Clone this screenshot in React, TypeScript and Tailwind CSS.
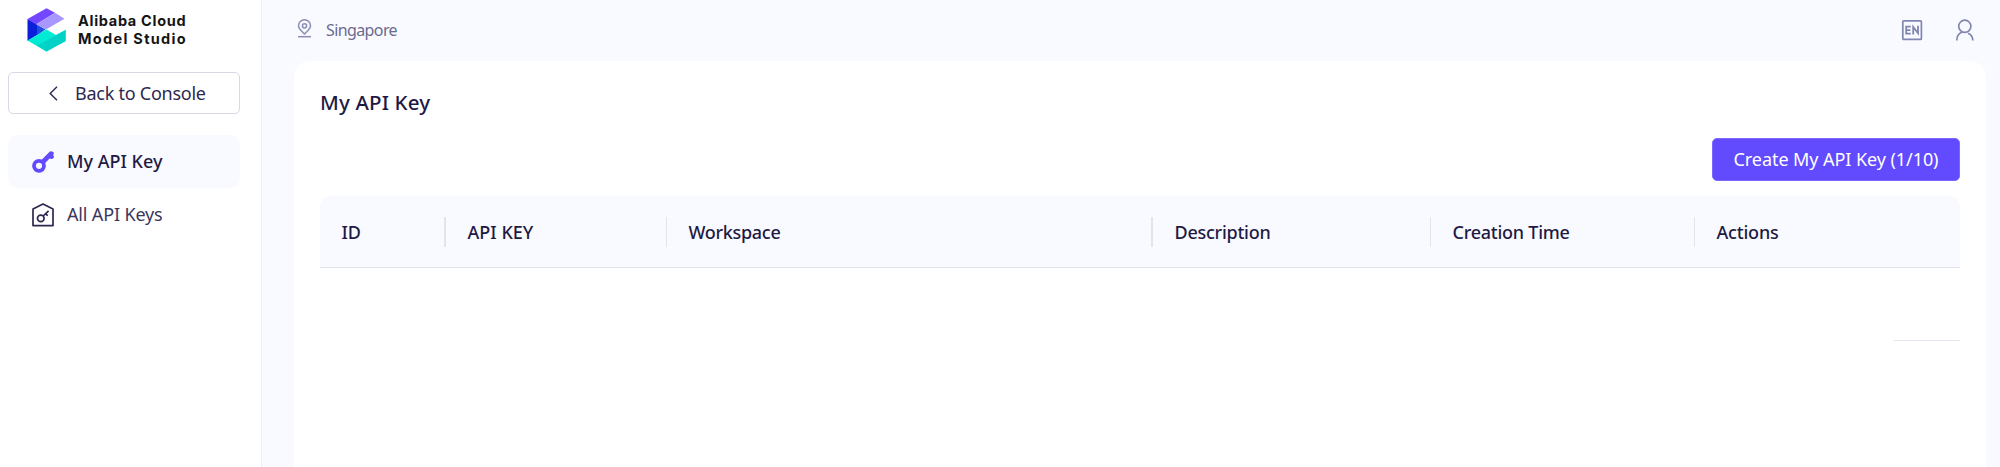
import React from "react";

function Logo() {
  return (
    <svg width="40" height="44" viewBox="0 0 40 44" className="shrink-0">
      <path d="M0.5 11 L10 16 V27 L0.5 33 Z" fill="#0a1fd8" />
      <path d="M10 16.5 L18.5 21.5 L10 27.5 Z" fill="#1a4fe0" />
      <path d="M19.5 0.3 L28 4.8 L9 16.5 L0.5 11 Z" fill="#7347ff" />
      <path d="M28 4.8 L37.5 10.8 L19 21.5 L9 16.5 Z" fill="#a897ff" />
      <path d="M0.5 32.5 L19.5 21.5 L29 27 L38.6 22 V33 L19.5 43.5 Z" fill="#00ebd3" />
      <path d="M10 37.5 L38.6 22 V33 L19.5 43.5 Z" fill="#00d2c8" />
    </svg>
  );
}

function KeyIcon() {
  return (
    <svg width="22" height="22" viewBox="0 0 22 22" fill="none" className="shrink-0">
      <circle cx="7" cy="14.8" r="5" stroke="#624aff" strokeWidth="3.8" />
      <path
        d="M8.5 10 L17.6 0.8 Q18.4 0 19.4 0.3 L21.2 0.9 Q22 1.3 21.8 2.2 L21.3 4 L21.9 5.6 Q22 6.6 21.2 7.3 Q20.4 8.2 19.4 7.9 L17.6 7.4 L12 13.2 Z"
        fill="#624aff"
      />
    </svg>
  );
}

function KeyHouseIcon() {
  return (
    <svg width="22" height="24" viewBox="0 0 22 24" fill="none" stroke="#2d2850" strokeWidth="1.7" className="shrink-0">
      <path d="M1 22.6 V6 L11 1 L21 6 V22.6 Z" strokeLinejoin="round" />
      <circle cx="8.8" cy="15.4" r="3.3" />
      <path d="M11.2 13 L16.6 7.8 M13.4 10.8 L15.8 12.6" />
    </svg>
  );
}

const columns = [
  { name: "ID", cell: "w-[126px] border-r-2", text: "" },
  { name: "API KEY", cell: "w-[221px] border-r", text: "tracking-[0.02px]" },
  { name: "Workspace", cell: "w-[486px] border-r-2", text: "tracking-[-0.3px]" },
  { name: "Description", cell: "w-[278px] border-r", text: "tracking-[-0.25px]" },
  { name: "Creation Time", cell: "w-[264px] border-r", text: "tracking-[-0.25px]" },
  { name: "Actions", cell: "flex-1", text: "tracking-[-0.2px]" },
];

export default function App() {
  return (
    <div className="flex h-[467px] w-[2000px] overflow-hidden bg-[#f9faff] font-['Noto_Sans',sans-serif] text-[#1f1a45]">
      <aside className="flex w-[262px] shrink-0 flex-col border-r border-[#efeff6] bg-white pl-2">
        <div className="flex h-[72px] items-start pt-2 pl-[19px]">
          <Logo />
          <div className="ml-[11px] pt-[4px] font-[Inter,sans-serif] text-[14.5px] leading-[17.5px] font-bold text-[#151515]">
            <div className="whitespace-nowrap tracking-[0.7px]">Alibaba Cloud</div>
            <div className="whitespace-nowrap tracking-[1.3px]">Model Studio</div>
          </div>
        </div>
        <button className="flex h-[42px] w-[232px] items-center rounded-[5px] border border-[#d8d8e8] pl-[40px]">
          <svg width="9" height="15" viewBox="0 0 9 15" fill="none" stroke="#2d2850" strokeWidth="1.4">
            <path d="M8 0.8 L1.2 7.5 L8 14.2" />
          </svg>
          <span className="ml-[17px] whitespace-nowrap text-[18px] tracking-[-0.25px] text-[#2d2850]">Back to Console</span>
        </button>
        <nav className="mt-[21px] w-[232px]">
          <div className="flex h-[53px] items-center gap-[13px] rounded-[10px] bg-[#f9faff] pl-6">
            <KeyIcon />
            <span className="whitespace-nowrap text-[18px] font-medium">My API Key</span>
          </div>
          <div className="flex h-[53px] items-center gap-[13px] pl-6">
            <KeyHouseIcon />
            <span className="whitespace-nowrap text-[18px] tracking-[-0.15px] text-[#3b3660]">All API Keys</span>
          </div>
        </nav>
      </aside>

      <main className="flex min-w-0 flex-1 flex-col pr-[14px] pl-8">
        <header className="flex h-[61px] shrink-0 items-start pr-[11px] pl-[3px]">
          <svg width="15" height="19" viewBox="0 0 15 19" fill="none" stroke="#8b8db3" strokeWidth="1.5" className="mt-[18.5px]">
            <path d="M7.5 15 C4.5 12 1.5 10 1.5 6.8 A6 6 0 0 1 13.5 6.8 C13.5 10 10.5 12 7.5 15 Z" />
            <circle cx="7.5" cy="6.8" r="2.1" />
            <path d="M1 17.7 H14" />
          </svg>
          <span className="mt-[18px] ml-[14px] whitespace-nowrap text-[16px] leading-6 tracking-[-0.6px] text-[#6b6b90]">Singapore</span>
          <div className="mt-[19px] ml-auto flex items-start gap-[32px]">
            <svg width="22" height="22" viewBox="0 0 22 22" fill="none" stroke="#8186b0" strokeWidth="1.7">
              <rect x="1.8" y="1.8" width="18.6" height="18.6" rx="1" />
              <path d="M9.8 7.6 H5.2 V14.6 H9.8 M5.2 11.1 H9.4 M12.2 15.4 V8 L17 14.2 V6.8" strokeWidth="1.8" />
            </svg>
            <svg width="20" height="22" viewBox="0 0 20 22" fill="none" stroke="#8186b0" strokeWidth="1.7">
              <circle cx="9.8" cy="7.3" r="6.1" />
              <path d="M1.8 21.5 C1.8 17 4.2 14 7.6 13 M13 14.2 C16 15.4 17.8 18 17.8 21.5" />
            </svg>
          </div>
        </header>

        <section className="flex flex-1 flex-col rounded-t-[16px] bg-white pr-[26px] pl-[26px]">
          <h1 className="mt-[26px] h-[30px] whitespace-nowrap text-[20.5px] leading-[30px] font-medium tracking-[0.15px]">My API Key</h1>
          <div className="mt-[21px] flex justify-end">
            <button className="h-[43px] w-[248px] rounded-[5px] border border-[#7c68ff] bg-[#624aff] text-center text-[18px] whitespace-nowrap tracking-[-0.07px] text-white">
              Create My API Key (1/10)
            </button>
          </div>
          <div className="mt-[15px] flex h-[72px] items-center rounded-t-[10px] border-b border-[#e2e2ec] bg-[#f9faff]">
            {columns.map((column) => (
              <div
                key={column.name}
                className={`${column.cell} flex h-[30px] shrink-0 items-center border-[#e4e4ec] pl-[21.5px]`}
              >
                <span className={`${column.text} pt-[2px] text-[18px] font-medium whitespace-nowrap`}>{column.name}</span>
              </div>
            ))}
          </div>
          <div className="flex h-[73px] justify-end">
            <div className="w-[66px] border-b border-[#e6e6f0]" />
          </div>
        </section>
      </main>
    </div>
  );
}
